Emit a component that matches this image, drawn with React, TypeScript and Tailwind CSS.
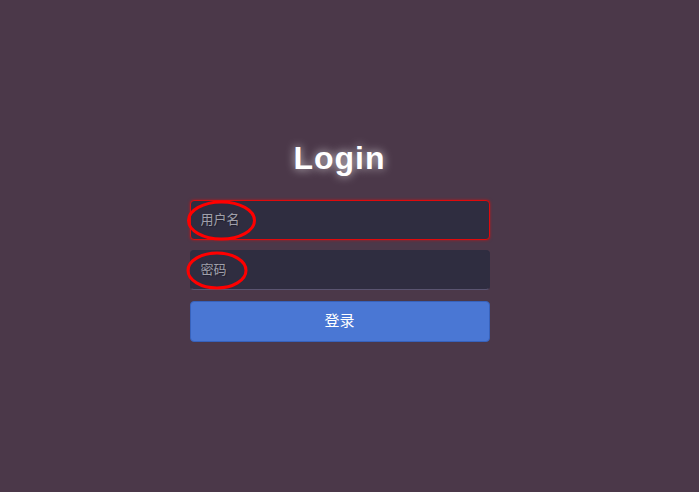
import React, { useState } from 'react';

const App: React.FC = () => {
  const [user, setUser] = useState('');
  const [pass, setPass] = useState('');

  return (
    <div
      className="relative min-h-screen w-full bg-[#4b3849] flex items-center justify-center pb-[11px] pr-[20px]"
      style={{ fontFamily: '"Liberation Sans", Arial, "Noto Sans CJK SC", sans-serif' }}
    >
      <form className="w-[300px] flex flex-col" onSubmit={(e) => e.preventDefault()}>
        <h1 className="text-[32px] leading-[37px] font-bold text-white text-center tracking-[1px] mb-[23px] [text-shadow:0_0_10px_rgba(255,255,255,0.75)]">
          Login
        </h1>
        <input
          value={user}
          onChange={(e) => setUser(e.target.value)}
          placeholder="用户名"
          className="h-[40px] w-full rounded-[4px] bg-[#2f2d40] border border-[#e00a0c] px-[10px] text-[13px] text-white placeholder:text-[#a0a0ab] outline-none shadow-[0_0_3px_rgba(255,0,0,0.6)] [text-shadow:1px_1px_1px_rgba(0,0,0,0.3)]"
        />
        <input
          type="password"
          value={pass}
          onChange={(e) => setPass(e.target.value)}
          placeholder="密码"
          className="mt-[10px] h-[40px] w-full rounded-[4px] bg-[#2f2d40] border border-[#2f2d40] border-b-[#5a5470] px-[10px] text-[13px] text-white placeholder:text-[#a0a0ab] outline-none [text-shadow:1px_1px_1px_rgba(0,0,0,0.3)]"
        />
        <button
          type="submit"
          className="mt-[11px] h-[41px] w-full rounded-[4px] bg-[#4a77d4] border border-[#3762bc] text-white text-[15px]"
        >
          登录
        </button>
      </form>

      {/* annotation marks */}
      <svg className="absolute inset-0 pointer-events-none" width="699" height="492" viewBox="0 0 699 492">
        <ellipse cx="221.5" cy="220.5" rx="33" ry="18.5" fill="none" stroke="#ff0000" strokeWidth="3" />
        <ellipse cx="217" cy="270.5" rx="29" ry="17.5" fill="none" stroke="#ff0000" strokeWidth="3" />
      </svg>
    </div>
  );
};

export default App;
